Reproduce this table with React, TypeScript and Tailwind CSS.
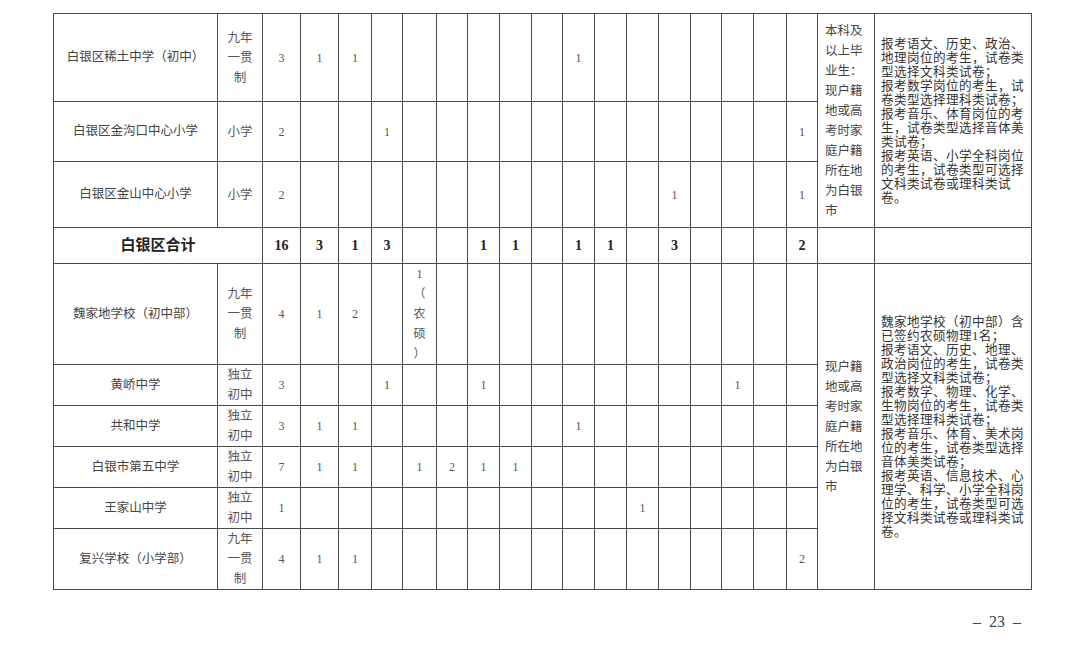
import React from "react";

const widths = [164, 45, 38, 38, 33, 31, 34, 31, 32, 32, 31, 32, 32, 32, 32, 31, 32, 33, 31, 57, 157];

type Row = {
  name: string;
  type: string[];
  h: number;
  vals: Record<number, React.ReactNode>;
};

const group1: Row[] = [
  { name: "白银区稀土中学（初中）", type: ["九年", "一贯", "制"], h: 88, vals: { 0: "3", 1: "1", 2: "1", 9: "1" } },
  { name: "白银区金沟口中心小学", type: ["小学"], h: 60, vals: { 0: "2", 3: "1", 16: "1" } },
  { name: "白银区金山中心小学", type: ["小学"], h: 66, vals: { 0: "2", 12: "1", 16: "1" } },
];

const group2: Row[] = [
  {
    name: "魏家地学校（初中部）",
    type: ["九年", "一贯", "制"],
    h: 101,
    vals: {
      0: "4",
      1: "1",
      2: "2",
      4: (
        <div className="flex flex-col items-center leading-[20px]">
          <span>1</span>
          <span>（</span>
          <span>农</span>
          <span>硕</span>
          <span>）</span>
        </div>
      ),
    },
  },
  { name: "黄峤中学", type: ["独立", "初中"], h: 40, vals: { 0: "3", 3: "1", 6: "1", 14: "1" } },
  { name: "共和中学", type: ["独立", "初中"], h: 41, vals: { 0: "3", 1: "1", 2: "1", 9: "1" } },
  { name: "白银市第五中学", type: ["独立", "初中"], h: 41, vals: { 0: "7", 1: "1", 2: "1", 4: "1", 5: "2", 6: "1", 7: "1" } },
  { name: "王家山中学", type: ["独立", "初中"], h: 39, vals: { 0: "1", 11: "1" } },
  { name: "复兴学校（小学部）", type: ["九年", "一贯", "制"], h: 61, vals: { 0: "4", 1: "1", 2: "1", 16: "2" } },
];

const totals: Record<number, string> = { 0: "16", 1: "3", 2: "1", 3: "3", 6: "1", 7: "1", 9: "1", 10: "1", 12: "3", 16: "2" };

const req1 = ["本科及", "以上毕", "业生：", "现户籍", "地或高", "考时家", "庭户籍", "所在地", "为白银", "市"];
const req2 = ["现户籍", "地或高", "考时家", "庭户籍", "所在地", "为白银", "市"];

const note1 = [
  "报考语文、历史、政治、",
  "地理岗位的考生，试卷类",
  "型选择文科类试卷；",
  "报考数学岗位的考生，试",
  "卷类型选择理科类试卷；",
  "报考音乐、体育岗位的考",
  "生，试卷类型选择音体美",
  "类试卷；",
  "报考英语、小学全科岗位",
  "的考生，试卷类型可选择",
  "文科类试卷或理科类试",
  "卷。",
];

const note2 = [
  "魏家地学校（初中部）含",
  "已签约农硕物理1名；",
  "报考语文、历史、地理、",
  "政治岗位的考生，试卷类",
  "型选择文科类试卷；",
  "报考数学、物理、化学、",
  "生物岗位的考生，试卷类",
  "型选择理科类试卷；",
  "报考音乐、体育、美术岗",
  "位的考生，试卷类型选择",
  "音体美类试卷；",
  "报考英语、信息技术、心",
  "理学、科学、小学全科岗",
  "位的考生，试卷类型可选",
  "择文科类试卷或理科类试",
  "卷。",
];

const td = "border border-[#4a4a4a] p-0 text-center align-middle";

function Req({ lines }: { lines: string[] }) {
  return (
    <div className="flex flex-col items-start pl-[7px] text-[12.5px] leading-[20px] text-[#444]">
      {lines.map((l, i) => (
        <span key={i} className="whitespace-nowrap">{l}</span>
      ))}
    </div>
  );
}

function Note({ lines }: { lines: string[] }) {
  return (
    <div className="flex flex-col items-start pl-[6px] text-[12.6px] leading-[14px] tracking-[0.4px] text-[#333]">
      {lines.map((l, i) => (
        <span key={i} className="whitespace-nowrap">{l}</span>
      ))}
    </div>
  );
}

function DataRow({ row, first, req, note, span }: { row: Row; first: boolean; req: string[]; note: string[]; span: number }) {
  return (
    <tr style={{ height: row.h }}>
      <td className={`${td} text-[12.5px] text-[#444]`}>{row.name}</td>
      <td className={`${td} text-[12.5px] leading-[20px] text-[#555]`}>
        {row.type.map((t, i) => (
          <div key={i}>{t}</div>
        ))}
      </td>
      {Array.from({ length: 17 }).map((_, i) => (
        <td key={i} className={`${td} text-[12px] text-[#555]`}>
          {row.vals[i] ?? ""}
        </td>
      ))}
      {first && (
        <>
          <td rowSpan={span} className={`${td} text-left`}>
            <Req lines={req} />
          </td>
          <td rowSpan={span} className={`${td} text-left`}>
            <Note lines={note} />
          </td>
        </>
      )}
    </tr>
  );
}

export default function App() {
  return (
    <div
      className="relative h-[647px] w-[1080px] overflow-hidden bg-white"
      style={{ fontFamily: '"Liberation Serif", "Noto Sans CJK SC", serif' }}
    >
      <div className="pl-[53px] pt-[13px]">
        <table className="table-fixed border-collapse border border-[#555]" style={{ width: 979 }}>
          <colgroup>
            {widths.map((w, i) => (
              <col key={i} style={{ width: w }} />
            ))}
          </colgroup>
          <tbody>
            {group1.map((r, i) => (
              <DataRow key={i} row={r} first={i === 0} req={req1} note={note1} span={3} />
            ))}
            <tr style={{ height: 36 }}>
              <td colSpan={2} className={`${td} text-[15px] font-bold text-[#222]`}>白银区合计</td>
              {Array.from({ length: 17 }).map((_, i) => (
                <td key={i} className={`${td} text-[14px] font-bold text-[#222]`}>
                  {totals[i] ?? ""}
                </td>
              ))}
              <td className={td}></td>
              <td className={td}></td>
            </tr>
            {group2.map((r, i) => (
              <DataRow key={i} row={r} first={i === 0} req={req2} note={note2} span={6} />
            ))}
          </tbody>
        </table>
      </div>
      <div className="absolute left-[973px] top-[610px] whitespace-pre text-[16px] text-[#444]">–  23  –</div>
    </div>
  );
}
